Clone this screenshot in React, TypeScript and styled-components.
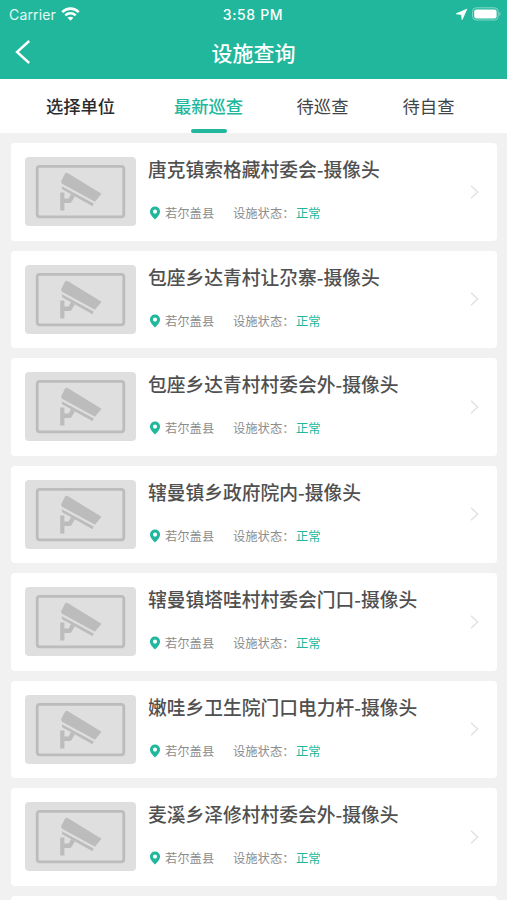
import React from "react";
import styled, { createGlobalStyle } from "styled-components";

const GlobalStyle = createGlobalStyle`
  * { box-sizing: border-box; }
  html, body { margin: 0; height: 900px; overflow: hidden; background: #f1f1f1; }
  body { font-family: "Noto Sans CJK SC", sans-serif; }
`;

const green = "#20b79c";

const Screen = styled.div`
  width: 507px;
  height: 900px;
  overflow: hidden;
  background: #f1f1f1;
`;

const Header = styled.header`
  height: 79px;
  background: ${green};
  color: #fff;
`;

const StatusBar = styled.div`
  height: 27px;
  padding: 0 6px 0 9px;
  display: grid;
  grid-template-columns: 1fr auto 1fr;
  align-items: center;
  font-family: Inter, "Liberation Sans", sans-serif;
  font-size: 14px;
  line-height: 27px;
`;

const Carrier = styled.div`
  display: flex;
  align-items: center;
  gap: 5px;
  letter-spacing: 0.15px;
  color: #e6f8f4;
`;

const Clock = styled.div`
  margin-right: 4px;
  padding-top: 1px;
  font-size: 14px;
  font-weight: 500;
  letter-spacing: 0.65px;
`;

const StatusIcons = styled.div`
  display: flex;
  align-items: center;
  justify-content: flex-end;
  gap: 4px;
`;

const NavBar = styled.div`
  height: 50px;
  padding: 0 15px;
  display: grid;
  grid-template-columns: 20px 1fr 20px;
  align-items: center;
`;

const NavTitle = styled.h1`
  margin: 0;
  text-align: center;
  font-size: 21px;
  line-height: 30px;
  font-weight: 500;
`;

const Tabs = styled.nav`
  height: 54px;
  display: grid;
  grid-template-columns: 135px 121px 107px 105px;
  padding-left: 13px;
  background: #fff;
`;

const Tab = styled.div<{ $active?: boolean; $strong?: boolean }>`
  display: flex;
  flex-direction: column;
  align-items: center;
  justify-content: space-between;
  padding-top: 14px;
  font-size: 17.3px;
  line-height: 26px;
  font-weight: ${(p) => (p.$active || p.$strong ? 500 : 400)};
  color: ${(p) => (p.$active ? green : p.$strong ? "#2b2b2b" : "#444")};
  white-space: nowrap;
`;

const Indicator = styled.span`
  width: 36px;
  height: 4px;
  border-radius: 2px;
  background: ${green};
`;

const List = styled.main`
  display: flex;
  flex-direction: column;
  gap: 10px;
  padding: 10px 10px 0 11px;
`;

const Card = styled.article`
  flex: none;
  height: 97.5px;
  padding: 14px 18px 14px 14px;
  display: flex;
  border-radius: 4px;
  background: #fff;
`;

const Thumb = styled.div`
  flex: none;
  width: 111px;
  height: 69px;
  border-radius: 4px;
  background: #dfdfdf;
  overflow: hidden;
  svg { display: block; }
`;

const Info = styled.div`
  flex: 1;
  margin: -1px 0 0 12px;
`;

const Title = styled.h2`
  margin: 0;
  font-size: 18.75px;
  line-height: 26px;
  font-weight: 500;
  color: #505050;
  white-space: nowrap;
`;

const Meta = styled.div`
  display: flex;
  align-items: center;
  margin: 22px 0 0 1px;
  font-size: 12.3px;
  line-height: 18px;
  color: #8c8c8c;
  white-space: nowrap;
`;

const Place = styled.span`
  width: 68px;
  margin-left: 4px;
`;

const State = styled.span`
  color: ${green};
`;

const StateLabel = styled.span`
  width: 63px;
`;

const Arrow = styled.div`
  display: flex;
  align-items: center;
`;

const WifiIcon = () => (
  <svg width="19" height="14" viewBox="0 0 19 14" fill="none" stroke="#fff" strokeWidth="2.6">
    <path d="M1.2 5.1C6 .5 13 .5 17.8 5.1" />
    <path d="M4.3 8.4c3-2.8 7.4-2.8 10.4 0" />
    <path d="M9.5 13.8 6.6 10.8c1.7-1.5 4.1-1.5 5.8 0z" fill="#fff" stroke="none" />
  </svg>
);

const LocationArrow = () => (
  <svg width="13" height="13" viewBox="0 0 13 13" fill="#fff" stroke="#fff" strokeWidth=".8" strokeLinejoin="round">
    <path d="M11.8 1.2 7.1 11.6 6.5 6.5 1.2 5.8z" />
  </svg>
);

const Battery = () => (
  <svg width="29" height="14" viewBox="0 0 29 14">
    <rect x=".6" y=".8" width="25.6" height="12.2" rx="3.6" fill="none" stroke="#86d8c8" strokeWidth="1" />
    <rect x="2.2" y="2.4" width="22.4" height="9" rx="2.2" fill="#fff" />
    <path d="M27.4 5v4c1.4-.5 1.4-3.5 0-4z" fill="#86d8c8" />
  </svg>
);

const BackIcon = () => (
  <svg width="16" height="24" viewBox="0 0 16 24" fill="none" stroke="#fff" strokeWidth="2.4">
    <path d="M14.2 1 2 12l12.2 11" />
  </svg>
);

const CameraIcon = () => (
  <svg width="111" height="69" viewBox="0 0 111 69">
    <rect x="12.2" y="9.3" width="86.6" height="50.5" rx="2.5" fill="none" stroke="#bcbcbc" strokeWidth="2.8" />
    <g fill="#bcbcbc">
      <path d="M43 16.2 76.5 36.8 70 44.7 37 26.7 36 24.4 39.7 17.2q1-2 3.3-1z" />
      <path d="M36.8 29.2 68.8 46.5 67.5 49.2 37.2 32.2z" />
      <path d="M35.2 35.6h4.2v5.8h4.3l2.3-4.4 3.9 2.3-3.2 5.4q-.7 1.2-2.2 1.2h-5.1v7.5h-4.2z" />
    </g>
  </svg>
);

const PinIcon = () => (
  <svg width="12" height="14" viewBox="0 0 12 14">
    <path fill={green} fillRule="evenodd" d="M6 .5a5.1 5.1 0 0 0-5.1 5.1c0 3 2.8 5.7 5.1 8 2.3-2.3 5.1-5 5.1-8A5.1 5.1 0 0 0 6 .5zm0 3a2.1 2.1 0 1 1 0 4.2 2.1 2.1 0 0 1 0-4.2z" />
  </svg>
);

const ChevronIcon = () => (
  <svg width="9" height="14" viewBox="0 0 9 14" fill="none" stroke="#e2e2e2" strokeWidth="1.5">
    <path d="m1 .8 6.6 6.2L1 13.2" />
  </svg>
);

const facilities = [
  "唐克镇索格藏村委会-摄像头",
  "包座乡达青村让尕寨-摄像头",
  "包座乡达青村村委会外-摄像头",
  "辖曼镇乡政府院内-摄像头",
  "辖曼镇塔哇村村委会门口-摄像头",
  "嫩哇乡卫生院门口电力杆-摄像头",
  "麦溪乡泽修村村委会外-摄像头",
];

const FacilityCard = ({ name }: { name: string }) => (
  <Card>
    <Thumb><CameraIcon /></Thumb>
    <Info>
      <Title>{name}</Title>
      <Meta>
        <PinIcon />
        <Place>若尔盖县</Place>
        <StateLabel>设施状态：</StateLabel>
        <State>正常</State>
      </Meta>
    </Info>
    <Arrow><ChevronIcon /></Arrow>
  </Card>
);

export default function App() {
  return (
    <>
      <GlobalStyle />
      <Screen>
        <Header>
          <StatusBar>
            <Carrier>Carrier <WifiIcon /></Carrier>
            <Clock>3:58 PM</Clock>
            <StatusIcons><LocationArrow /><Battery /></StatusIcons>
          </StatusBar>
          <NavBar>
            <BackIcon />
            <NavTitle>设施查询</NavTitle>
          </NavBar>
        </Header>
        <Tabs>
          <Tab $strong>选择单位</Tab>
          <Tab $active>最新巡查<Indicator /></Tab>
          <Tab>待巡查</Tab>
          <Tab>待自查</Tab>
        </Tabs>
        <List>
          {facilities.map((name) => <FacilityCard key={name} name={name} />)}
          <Card />
        </List>
      </Screen>
    </>
  );
}
